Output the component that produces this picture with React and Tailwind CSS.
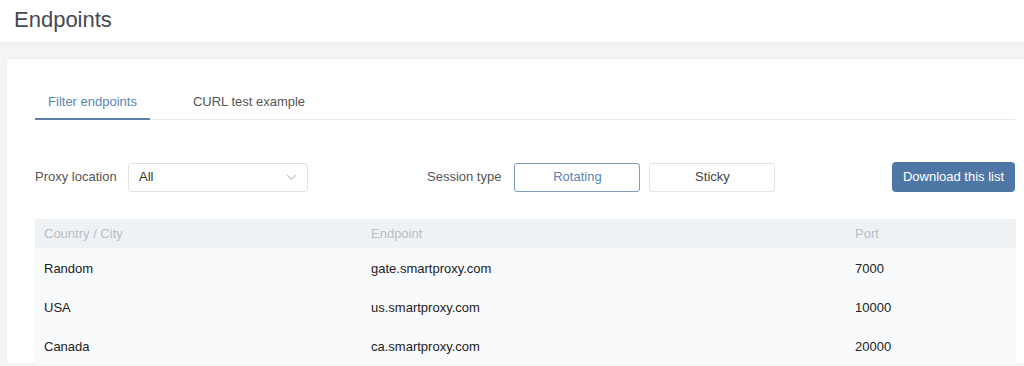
import React, { useState } from "react";

const rows = [
  { city: "Random", endpoint: "gate.smartproxy.com", port: "7000" },
  { city: "USA", endpoint: "us.smartproxy.com", port: "10000" },
  { city: "Canada", endpoint: "ca.smartproxy.com", port: "20000" },
];

export default function App() {
  const [tab, setTab] = useState("filter");
  const [session, setSession] = useState("rotating");

  return (
    <div
      className="w-[1024px] h-[366px] overflow-hidden bg-[#f3f4f5] text-[13px] text-[#333]"
      style={{ fontFamily: '"Liberation Sans", Arial, sans-serif' }}
    >
      <div className="h-[43px] bg-white px-[14px] pt-[6px] border-b border-[#ebedef]">
        <h1 className="text-[22px] leading-[28px] text-[#454a50]">Endpoints</h1>
      </div>

      <div className="ml-[6px] mt-[15px] h-[305px] bg-white border-l border-t border-[#eceef0] pl-[28px] pr-[9px]">
        <div className="flex pt-[28px] border-b border-[#e6e9ec]">
          <button
            type="button"
            onClick={() => setTab("filter")}
            className={`w-[115px] h-[33px] text-center border-b-2 -mb-px pb-[2px] ${
              tab === "filter" ? "border-[#5a7fa9] text-[#5a84b0]" : "border-transparent text-[#555]"
            }`}
          >
            Filter endpoints
          </button>
          <button
            type="button"
            onClick={() => setTab("curl")}
            className={`ml-[37px] w-[124px] h-[33px] text-center border-b-2 -mb-px pb-[2px] ${
              tab === "curl" ? "border-[#5a7fa9] text-[#5a84b0]" : "border-transparent text-[#555]"
            }`}
          >
            CURL test example
          </button>
        </div>

        <div className="flex items-center mt-[42px] h-[30px]">
          <span className="text-[#555] w-[93px]">Proxy location</span>
          <div className="w-[180px] h-[29px] border border-[#dfe2e6] rounded-[3px] flex items-center justify-between pl-[10px] pr-[10px]">
            <span className="text-[#333]">All</span>
            <svg width="11" height="7" viewBox="0 0 11 7" fill="none">
              <path d="M1 1l4.5 4.5L10 1" stroke="#c3c8ce" strokeWidth="1.1" />
            </svg>
          </div>
          <span className="ml-[119px] text-[#555]">Session type</span>
          <button
            type="button"
            onClick={() => setSession("rotating")}
            className={`ml-[13px] w-[126px] h-[29px] rounded-[3px] border ${
              session === "rotating" ? "border-[#7d9bc0] text-[#5a84b0]" : "border-[#e0e3e7] text-[#444]"
            }`}
          >
            Rotating
          </button>
          <button
            type="button"
            onClick={() => setSession("sticky")}
            className={`ml-[9px] w-[126px] h-[29px] rounded-[3px] border ${
              session === "sticky" ? "border-[#7d9bc0] text-[#5a84b0]" : "border-[#e0e3e7] text-[#444]"
            }`}
          >
            Sticky
          </button>
          <button
            type="button"
            className="ml-auto w-[123px] h-[30px] rounded-[4px] bg-[#4e77a5] text-white"
          >
            Download this list
          </button>
        </div>

        <div className="mt-[27px] w-[981px]">
          <div className="flex items-center h-[29px] bg-[#eef2f5] text-[#b7bec6] pl-[9px] pr-[10px] pt-[1px]">
            <span className="w-[327px]">Country / City</span>
            <span className="w-[484px]">Endpoint</span>
            <span>Port</span>
          </div>
          {rows.map((r) => (
            <div key={r.city} className="flex items-center h-[39px] bg-[#f9fafb] text-[#222] pl-[9px] pr-[10px] pt-[2px]">
              <span className="w-[327px]">{r.city}</span>
              <span className="w-[484px]">{r.endpoint}</span>
              <span>{r.port}</span>
            </div>
          ))}
        </div>
      </div>
    </div>
  );
}
